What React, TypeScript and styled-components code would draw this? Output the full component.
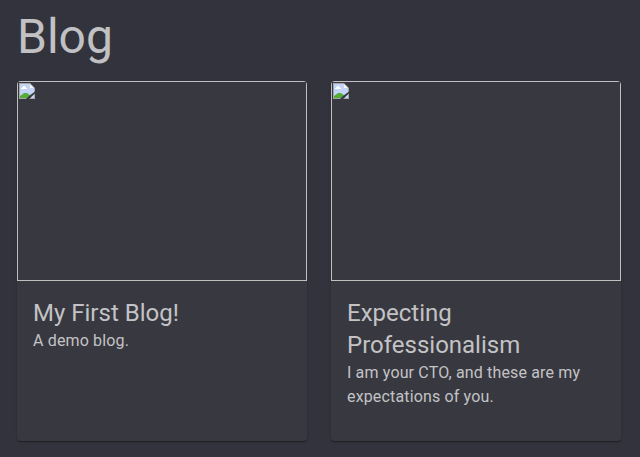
import React from "react";
import styled, { createGlobalStyle } from "styled-components";

const GlobalStyle = createGlobalStyle`
  * { box-sizing: border-box; }
  body {
    margin: 0;
    overflow: hidden;
    background: #33333d;
    color: #c3c3c5;
    font-family: Roboto, sans-serif;
  }
`;

const Page = styled.main`
  height: 457px;
  padding: 9px 19px 16px 17px;
`;

const PageTitle = styled.h1`
  margin: 0;
  font-size: 48px;
  font-weight: 400;
  line-height: 56px;
  color: #c1c1c3;
`;

const CardGrid = styled.div`
  display: grid;
  grid-template-columns: 290px 290px;
  gap: 24px;
  margin-top: 16px;
`;

const Card = styled.article`
  height: 360px;
  border-radius: 4px;
  overflow: hidden;
  background: #383840;
  box-shadow: 0 2px 1px -1px rgba(0, 0, 0, 0.2), 0 1px 1px rgba(0, 0, 0, 0.14), 0 1px 3px rgba(0, 0, 0, 0.12);
`;

const Media = styled.div`
  height: 200px;
  padding: 1px;
  border: 1px solid #c0c0c0;
`;

const CardBody = styled.div`
  padding: 16px;
`;

const CardTitle = styled.h2`
  margin: 0;
  font-size: 24px;
  font-weight: 400;
  line-height: 32px;
`;

const Summary = styled.p`
  margin: 0;
  font-size: 16px;
  font-weight: 400;
  line-height: 24px;
  letter-spacing: 0.00938em;
`;

const MissingImage = () => (
  <svg width="16" height="16" viewBox="0 0 16 16" display="block">
    <path d="M0 0H11L16 5V16H0Z" fill="#a6a6a6" />
    <path d="M1 1H11V5H15V15H1Z" fill="#c3d5f6" />
    <path d="M1 15V13L5 10H8L12 13V15Z" fill="#56ad38" />
    <path d="M2 6V5H3V4H4V3H6V4H7V5H8V6Z" fill="#fff" />
    <path d="M11 1L15 5H11Z" fill="#f5f5f5" />
    <path d="M16 8.5V10.5L10 16H7L10 13Z" fill="#383840" />
  </svg>
);

const posts = [
  { title: "My First Blog!", summary: "A demo blog." },
  { title: "Expecting Professionalism", summary: "I am your CTO, and these are my expectations of you." },
];

export default function App() {
  return (
    <Page>
      <GlobalStyle />
      <PageTitle>Blog</PageTitle>
      <CardGrid>
        {posts.map((post) => (
          <Card key={post.title}>
            <Media><MissingImage /></Media>
            <CardBody>
              <CardTitle>{post.title}</CardTitle>
              <Summary>{post.summary}</Summary>
            </CardBody>
          </Card>
        ))}
      </CardGrid>
    </Page>
  );
}
